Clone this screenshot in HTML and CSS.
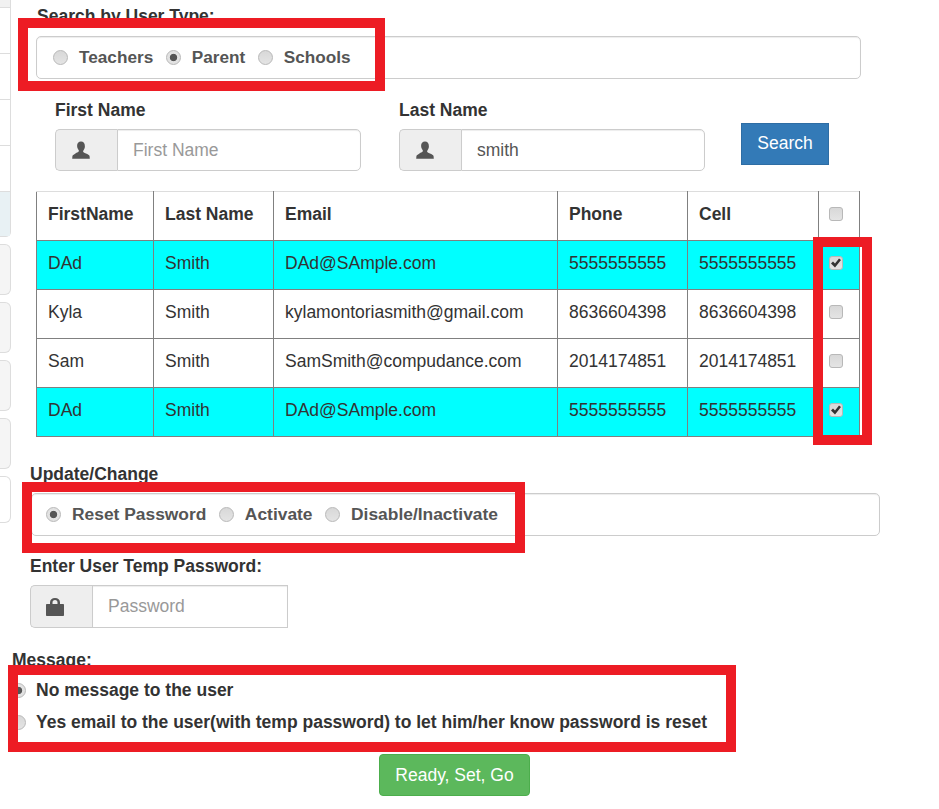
FILE: index.html
```html
<!DOCTYPE html>
<html lang="en">
<head>
<meta charset="utf-8">
<title>Search by User Type</title>
<link rel="stylesheet" href="styles.css">
</head>
<body>
<div class="page">
  <aside class="side">
    <div class="side-top"></div>
    <div class="side-list">
      <div class="side-row"></div>
      <div class="side-row"></div>
      <div class="side-row"></div>
      <div class="side-row"></div>
      <div class="side-row side-row-active"></div>
    </div>
    <div class="side-panel"></div>
    <div class="side-panel"></div>
    <div class="side-panel"></div>
    <div class="side-panel"></div>
    <div class="side-panel side-panel-white"></div>
  </aside>
  <main class="main">
    <label class="lbl lbl-search">Search by User Type:</label>
    <div class="radio-box box-search">
      <label class="opt"><input type="radio" name="utype"><span>Teachers</span></label>
      <label class="opt"><input type="radio" name="utype" checked><span>Parent</span></label>
      <label class="opt"><input type="radio" name="utype"><span>Schools</span></label>
    </div>

    <div class="names">
      <div class="field">
        <label class="lbl">First Name</label>
        <div class="group">
          <span class="addon"><svg class="ico" viewBox="0 0 18 18"><path d="M9 0.500c-2.500 0-3.900 1.900-3.900 4.300 0 1.700.6 3.200 1.500 4.200.4.500.4 1.100.1 1.600-.3.500-1.200.9-2.600 1.500C2.200 13.400.7 14.100.4 15.200L.2 17.700h17.600l-.2-2.500c-.3-1.100-1.800-1.800-3.700-2.600-1.400-.6-2.300-1-2.600-1.500-.3-.5-.3-1.100.1-1.600.9-1 1.500-2.500 1.500-4.200C12.900 2.400 11.500.5 9 .5z"/></svg></span>
          <input class="ctl" type="text" placeholder="First Name">
        </div>
      </div>
      <div class="field">
        <label class="lbl">Last Name</label>
        <div class="group">
          <span class="addon"><svg class="ico" viewBox="0 0 18 18"><path d="M9 0.500c-2.500 0-3.900 1.900-3.900 4.300 0 1.700.6 3.200 1.500 4.200.4.500.4 1.100.1 1.600-.3.500-1.200.9-2.600 1.500C2.200 13.400.7 14.100.4 15.200L.2 17.700h17.600l-.2-2.500c-.3-1.100-1.800-1.800-3.700-2.600-1.400-.6-2.300-1-2.600-1.500-.3-.5-.3-1.100.1-1.600.9-1 1.500-2.500 1.500-4.200C12.900 2.400 11.500.5 9 .5z"/></svg></span>
          <input class="ctl" type="text" value="smith">
        </div>
      </div>
      <button class="btn-search" type="button">Search</button>
    </div>

    <table class="users">
      <colgroup>
        <col class="c1"><col class="c2"><col class="c3"><col class="c4"><col class="c5"><col class="c6">
      </colgroup>
      <thead>
        <tr><th>FirstName</th><th>Last Name</th><th>Email</th><th>Phone</th><th>Cell</th><th class="chk"><input type="checkbox"></th></tr>
      </thead>
      <tbody>
        <tr class="sel"><td>DAd</td><td>Smith</td><td>DAd@SAmple.com</td><td>5555555555</td><td>5555555555</td><td class="chk"><input type="checkbox" checked></td></tr>
        <tr><td>Kyla</td><td>Smith</td><td>kylamontoriasmith@gmail.com</td><td>8636604398</td><td>8636604398</td><td class="chk"><input type="checkbox"></td></tr>
        <tr><td>Sam</td><td>Smith</td><td>SamSmith@compudance.com</td><td>2014174851</td><td>2014174851</td><td class="chk"><input type="checkbox"></td></tr>
        <tr class="sel"><td>DAd</td><td>Smith</td><td>DAd@SAmple.com</td><td>5555555555</td><td>5555555555</td><td class="chk"><input type="checkbox" checked></td></tr>
      </tbody>
    </table>

    <label class="lbl lbl-update">Update/Change</label>
    <div class="radio-box box-update">
      <label class="opt"><input type="radio" name="act" checked><span>Reset Password</span></label>
      <label class="opt"><input type="radio" name="act"><span>Activate</span></label>
      <label class="opt"><input type="radio" name="act"><span>Disable/Inactivate</span></label>
    </div>

    <label class="lbl lbl-temp">Enter User Temp Password:</label>
    <div class="group group-pass">
      <span class="addon"><svg class="ico" viewBox="0 0 18 18"><path d="M9 0C6 0 4 1.700 4 4.500V6H1C.4 6 0 6.400 0 7v10c0 .6.4 1 1 1h16c.6 0 1-.4 1-1V7c0-.6-.4-1-1-1h-3V4.500C14 1.700 12 0 9 0zm0 2c1.600 0 2.500.9 2.500 2.500V6h-5V4.500C6.500 2.900 7.400 2 9 2z"/></svg></span>
      <input class="ctl" type="password" placeholder="Password">
    </div>

    <label class="lbl lbl-msg">Message:</label>
    <div class="msg-list">
      <label class="msg-opt"><input type="radio" name="msg" checked><span>No message to the user</span></label>
      <label class="msg-opt"><input type="radio" name="msg"><span>Yes email to the user(with temp password) to let him/her know password is reset</span></label>
    </div>

    <button class="btn-go" type="button">Ready, Set, Go</button>
  </main>
  <div class="mark mark-a"></div>
  <div class="mark mark-b"></div>
  <div class="mark mark-c"></div>
  <div class="mark mark-d"></div>
</div>
</body>
</html>
```
FILE: styles.css
```css
* { box-sizing: border-box; }
html, body { margin: 0; padding: 0; background: #fff; }
body {
  font-family: "Liberation Sans", Arial, sans-serif;
  font-size: 17.5px;
  color: #333;
  overflow: hidden;
}
.page {
  position: relative;
  width: 939px;
  height: 809px;
  overflow: hidden;
  display: flex;
}

/* cropped side navigation */
.side { width: 11px; flex: none; }
.side-top { height: 7px; background: #f1f1f1; border-right: 1px solid #ddd; }
.side-list { border-right: 1px solid #ddd; border-bottom-right-radius: 5px; border-bottom: 1px solid #ddd; margin-bottom: 7px; }
.side-row { height: 46px; border-top: 1px solid #ddd; background: #fff; }
.side-row-active { background: #e8f1f4; height: 45px; }
.side-panel {
  height: 51px;
  margin-bottom: 7px;
  background: #f5f5f5;
  border: 1px solid #ddd;
  border-left: 0;
  border-radius: 0 6px 6px 0;
}
.side-panel-white { background: #fff; height: 47px; }

/* main form */
.main {
  flex: 1;
  min-width: 0;
  display: flex;
  flex-direction: column;
  align-items: flex-start;
  padding-top: 7px;
}
.lbl {
  display: block;
  font-weight: bold;
  font-size: 17.5px;
  line-height: 18px;
  color: #333;
}
.lbl-search { margin-left: 26px; }
.lbl-update { margin: 28px 0 10px 19px; }
.lbl-temp { margin: 21px 0 10px 19px; }
.lbl-msg { margin: 23px 0 0 1px; }

.radio-box {
  display: flex;
  align-items: center;
  height: 43px;
  border: 1px solid #ccc;
  border-radius: 5px;
  box-shadow: inset 0 1px 1px rgba(0, 0, 0, .075);
}
.box-search { width: 825px; margin: 11px 0 0 25px; padding-left: 16px; gap: 12.5px; font-size: 17.2px; }
.box-update { width: 849px; margin-left: 20px; padding-left: 14px; gap: 12.5px; font-size: 17.4px; }
.opt { display: flex; align-items: center; gap: 11px; font-weight: bold; color: #555; line-height: 18px; }
.opt span { padding-bottom: 2px; }

input[type="radio"], input[type="checkbox"] {
  appearance: none;
  -webkit-appearance: none;
  margin: 0;
  flex: none;
  width: 15px;
  height: 15px;
  border: 1px solid #b8b8b8;
  background: linear-gradient(#d8d8d8, #e4e4e4);
}
input[type="radio"] { border-radius: 50%; }
input[type="radio"]:checked {
  background: radial-gradient(circle, #555 0, #555 3.300px, #e2e2e2 4.100px);
}
input[type="checkbox"] {
  display: block;
  width: 14px;
  height: 14px;
  margin: 0 0 0 10px;
  border-radius: 3px;
}
input[type="checkbox"]:checked {
  background:
    url("data:image/svg+xml,%3Csvg xmlns='http://www.w3.org/2000/svg' viewBox='0 0 14 14'%3E%3Cpath d='M2 7.500l2-2 2 2 4-5 2 1.500-6 7.500z' fill='%23333'/%3E%3C/svg%3E") center / 14px 14px no-repeat,
    linear-gradient(#d8d8d8, #e4e4e4);
}

.names {
  display: flex;
  align-items: flex-start;
  gap: 38px;
  margin: 22px 0 0 44px;
}
.field { width: 306px; }
.field .lbl { margin: 0 0 10px 0; }
.group { display: flex; height: 42px; width: 100%; }
.addon {
  flex: none;
  width: 62px;
  display: flex;
  align-items: center;
  padding-left: 16px;
  background: #eee;
  border: 1px solid #ccc;
  border-right: 0;
  border-radius: 5px 0 0 5px;
}
.ico { width: 18px; height: 18px; fill: #555; }
.ctl {
  flex: 1;
  min-width: 0;
  height: 100%;
  padding: 0 15px;
  font: 17.5px "Liberation Sans", Arial, sans-serif;
  color: #555;
  background: #fff;
  border: 1px solid #ccc;
  border-radius: 0 5px 5px 0;
  box-shadow: inset 0 1px 1px rgba(0, 0, 0, .075);
  outline: none;
}
.ctl::placeholder { color: #999; opacity: 1; }
.group-pass { width: 258px; height: 43px; margin-left: 19px; }
.group-pass .ctl { border-radius: 0; }
.group-pass .addon { padding-left: 15px; }

.btn-search {
  width: 88px;
  height: 42px;
  margin: 22px 0 0 -2px;
  padding: 0 0 2px;
  font: 17.5px "Liberation Sans", Arial, sans-serif;
  color: #fff;
  background: #337ab7;
  border: 1px solid #2e6da4;
  border-radius: 0;
}

.users {
  width: 823px;
  margin: 20px 0 0 25px;
  border-collapse: collapse;
  table-layout: fixed;
}
.c1 { width: 117px; } .c2 { width: 120px; } .c3 { width: 284px; }
.c4 { width: 130px; } .c5 { width: 131px; } .c6 { width: 41px; }
.users th, .users td {
  height: 49px;
  padding: 0 10px 4px 11px;
  border: 1px solid #808080;
  text-align: left;
  font-size: 17.5px;
  line-height: 20px;
  vertical-align: middle;
}
.users th { font-weight: bold; border-top-color: #ddd; }
.users .chk { padding: 0 0 5px; }
.users .sel td { background: #0ff; }

.msg-list { display: flex; flex-direction: column; margin-top: 5px; }
.msg-opt { display: flex; align-items: center; gap: 10px; height: 32px; font-weight: bold; color: #333; line-height: 18px; }

.btn-go {
  width: 151px;
  height: 42px;
  margin: 16px 0 0 368px;
  padding: 0;
  font: 17.5px "Liberation Sans", Arial, sans-serif;
  color: #fff;
  background: #5cb85c;
  border: 1px solid #4cae4c;
  border-radius: 4px;
}

/* red review annotations on top of the form */
.mark { position: absolute; border: 10px solid #ed1c24; }
.mark-a { left: 18px; top: 18px; width: 367px; height: 73px; }
.mark-b { left: 813px; top: 237px; width: 59px; height: 208px; }
.mark-c { left: 22px; top: 482px; width: 503px; height: 71px; }
.mark-d { left: 8px; top: 665px; width: 728px; height: 87px; }
```
